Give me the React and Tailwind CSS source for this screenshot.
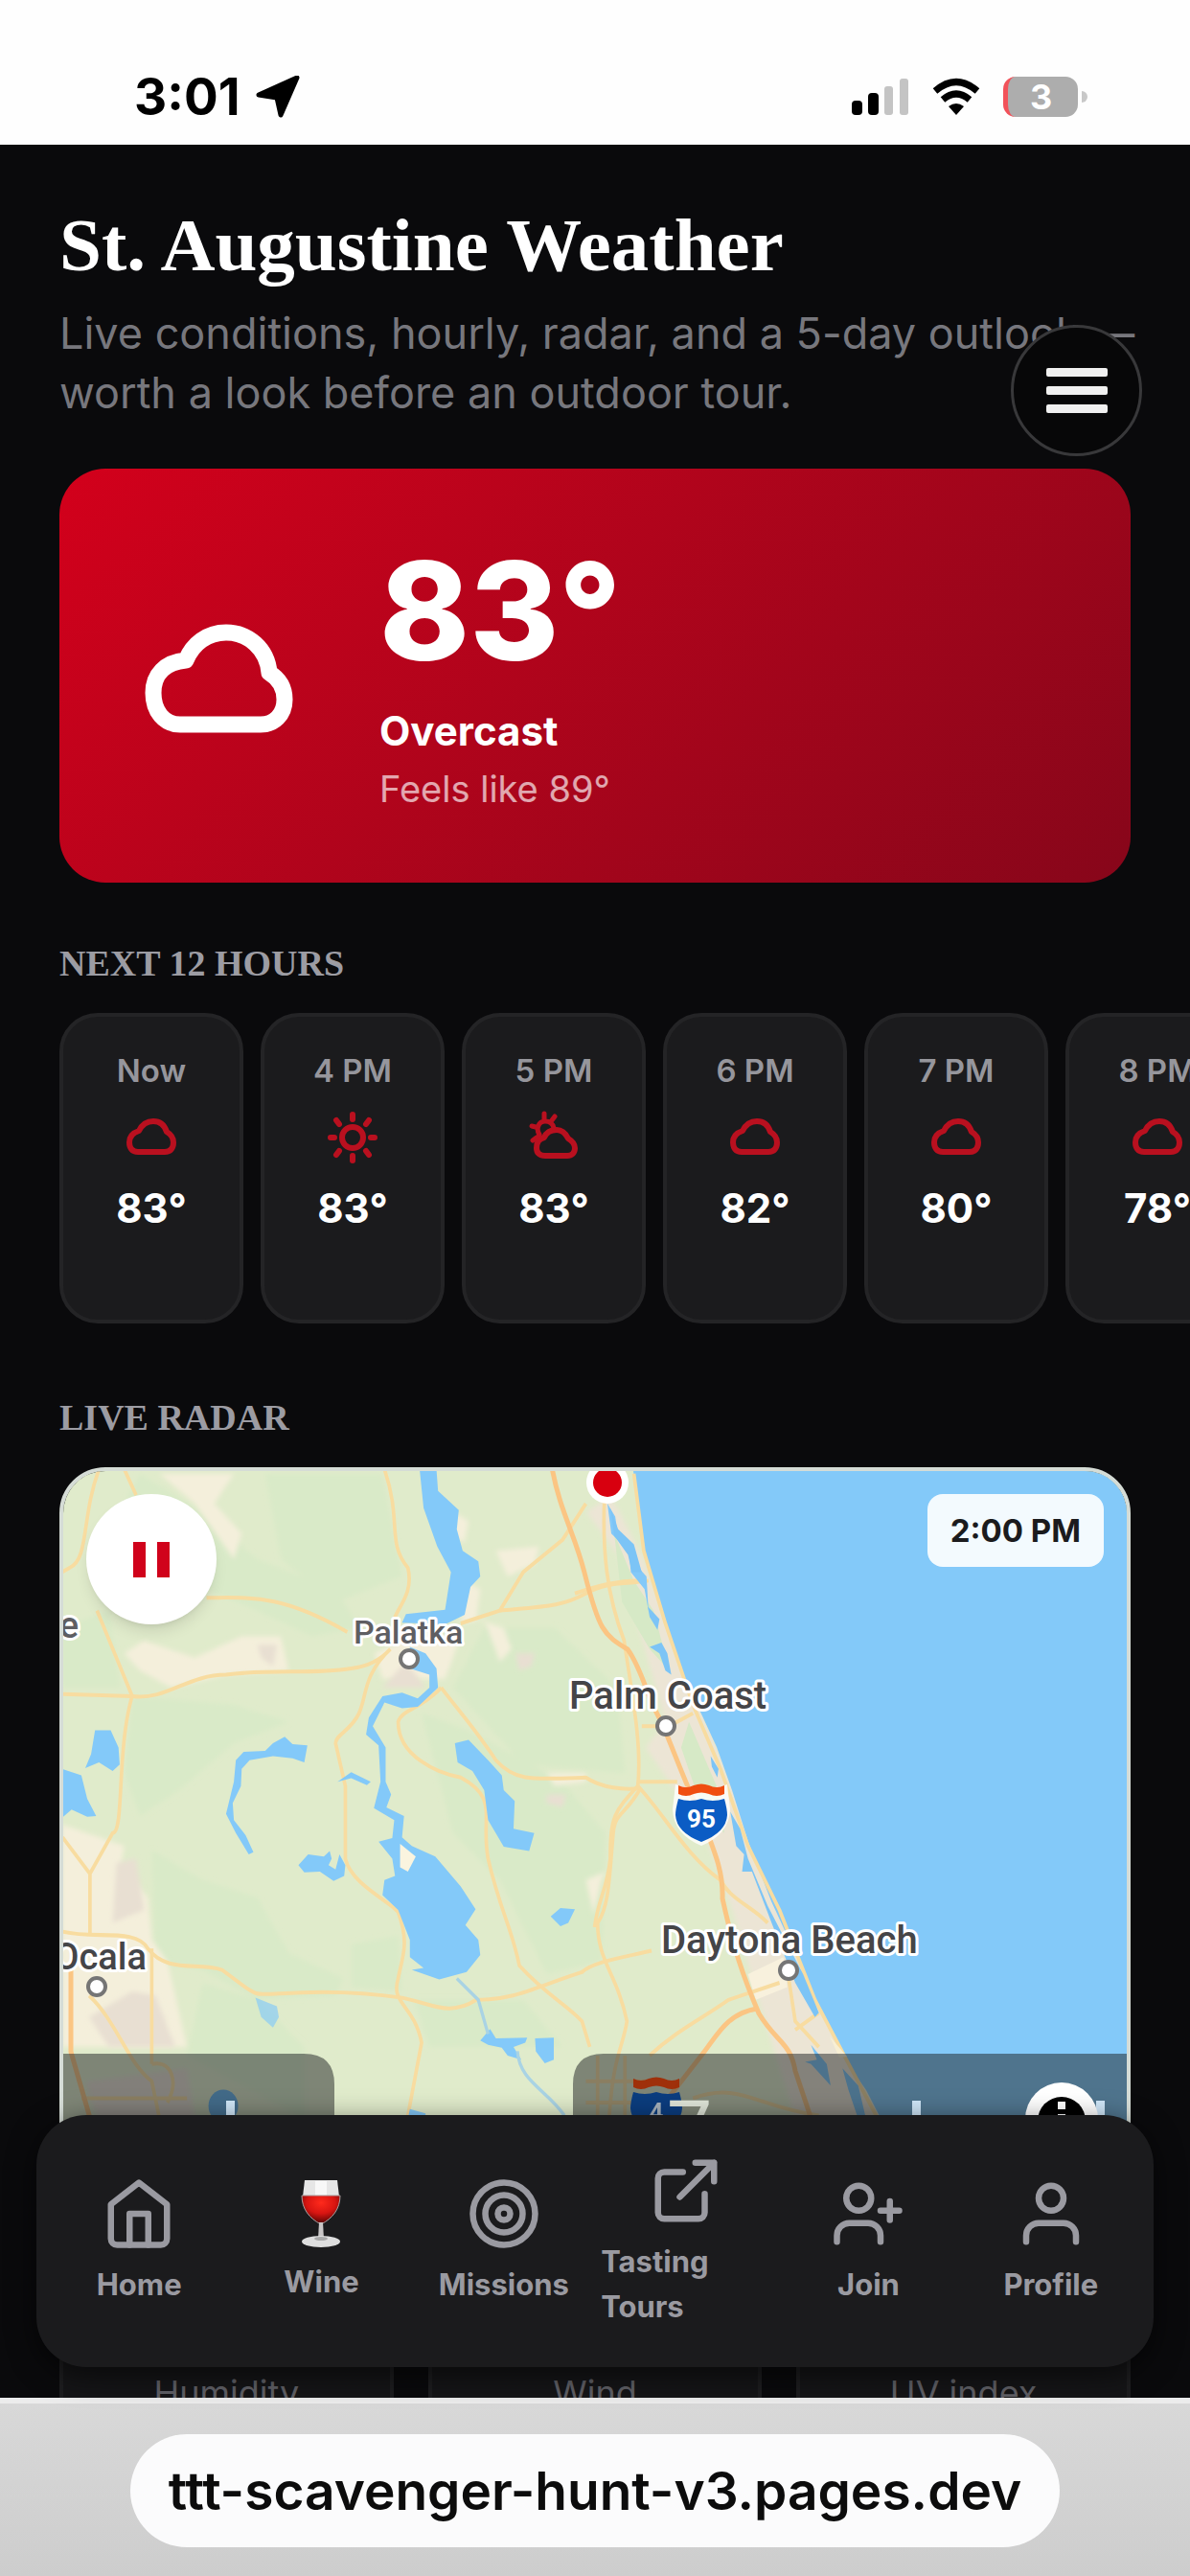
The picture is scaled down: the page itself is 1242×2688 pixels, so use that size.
import React from "react";

const CLOUD =
  "M188 755C171 755 160 741 160 722C160 703 172 690 194 688C201 671 216 659 236 659C259 659 279 676 281 701C291 707 297 716 297 729C297 745 286 755 272 755Z";

function Cloud({ className }) {
  return (
    <svg viewBox="150 649 158 118" className={className} fill="none" stroke="currentColor" strokeWidth="17" strokeLinejoin="round" aria-hidden="true">
      <path d={CLOUD} />
    </svg>
  );
}

function SmallCloud() {
  return (
    <svg viewBox="0 0 52 60" className="h-[60px] w-[52px]" fill="none" stroke="currentColor" strokeWidth="6" strokeLinejoin="round" aria-hidden="true">
      <path d="M12 45C6 45 3 41 3 35C3 29 7 25 13 23C16 17 21 13 28 13C36 13 40 18 42 24C47 27 49 31 49 35C49 41 46 45 40 45Z" />
    </svg>
  );
}

function Sun() {
  return (
    <svg viewBox="0 0 52 60" className="h-[60px] w-[52px]" fill="none" stroke="currentColor" strokeWidth="6" strokeLinecap="round" aria-hidden="true">
      <circle cx="26" cy="30" r="11" />
      <path d="M26 6v5M26 49v5M3 30h4M45 30h4M9 12l3 4M43 12l-3 4M9 48l3-4M43 48l-3-4" />
    </svg>
  );
}

function PartlyCloudy() {
  return (
    <svg viewBox="0 0 52 60" className="h-[60px] w-[52px]" fill="none" stroke="currentColor" strokeWidth="6" strokeLinejoin="round" strokeLinecap="round" aria-hidden="true">
      <path d="M17 49C11 49 8 46 8 41C8 35 11 31 16 30C18 25 23 22 29 22C36 22 39 27 41 31C46 34 48 37 48 41C48 46 45 49 40 49Z" />
      <path d="M11 27C7 21 10 13 17 13C22 13 25 16 26 20M16 5v6M27 8l-3 4M3 18l4 1M4 33l4-3" strokeWidth="5" />
    </svg>
  );
}

const HOURS = [
  { label: "Now", Icon: SmallCloud, temp: "83°" },
  { label: "4 PM", Icon: Sun, temp: "83°" },
  { label: "5 PM", Icon: PartlyCloudy, temp: "83°" },
  { label: "6 PM", Icon: SmallCloud, temp: "82°" },
  { label: "7 PM", Icon: SmallCloud, temp: "80°" },
  { label: "8 PM", Icon: SmallCloud, temp: "78°" },
];

function NavIcon({ children }) {
  return (
    <svg viewBox="0 0 24 24" className="size-[78px]" fill="none" stroke="currentColor" strokeWidth="2" strokeLinecap="round" strokeLinejoin="round" aria-hidden="true">
      {children}
    </svg>
  );
}

function WineGlass() {
  return (
    <svg viewBox="0 0 42 72" className="h-[72px] w-[42px]" aria-hidden="true">
      <defs>
        <radialGradient id="wine" cx="50%" cy="25%" r="75%">
          <stop offset="0" stopColor="#ff2a1c" />
          <stop offset="0.5" stopColor="#d81511" />
          <stop offset="1" stopColor="#4a0303" />
        </radialGradient>
      </defs>
      <path d="M4 1H38L40 18H2Z" fill="#e6e6e6" />
      <path d="M15 2H27V17H15Z" fill="#f8f8f8" />
      <path d="M1 17H41C41 31 33 41 21 47C9 41 1 31 1 17Z" fill="url(#wine)" stroke="#a9a0a0" strokeWidth="1" />
      <path d="M19 45H23L24 62H18Z" fill="#c9c6c6" />
      <ellipse cx="21" cy="65" rx="20" ry="6" fill="#dedede" />
      <ellipse cx="21" cy="62" rx="7" ry="2" fill="#a8a8a8" />
    </svg>
  );
}

const NAV = [
  {
    label: "Home",
    icon: (
      <NavIcon>
        <path d="m3 9 9-7 9 7v11a2 2 0 0 1-2 2H5a2 2 0 0 1-2-2z" />
        <path d="M9 22V12h6v10" />
      </NavIcon>
    ),
  },
  { label: "Wine", icon: <WineGlass /> },
  {
    label: "Missions",
    icon: (
      <NavIcon>
        <circle cx="12" cy="12" r="10" />
        <circle cx="12" cy="12" r="6" />
        <circle cx="12" cy="12" r="2" />
      </NavIcon>
    ),
  },
  {
    label: "Tasting Tours",
    icon: (
      <NavIcon>
        <path d="M18 13v6a2 2 0 0 1-2 2H5a2 2 0 0 1-2-2V8a2 2 0 0 1 2-2h6" />
        <path d="M15 3h6v6M10 14 21 3" />
      </NavIcon>
    ),
  },
  {
    label: "Join",
    icon: (
      <NavIcon>
        <path d="M16 21v-2a4 4 0 0 0-4-4H6a4 4 0 0 0-4 4v2" />
        <circle cx="9" cy="7" r="4" />
        <path d="M19 8v6M22 11h-6" />
      </NavIcon>
    ),
  },
  {
    label: "Profile",
    icon: (
      <NavIcon>
        <path d="M20 21v-2a4 4 0 0 0-4-4H8a4 4 0 0 0-4 4v2" />
        <circle cx="12" cy="7" r="4" />
      </NavIcon>
    ),
  },
];

function Shield({ x, y, label, dim }) {
  return (
    <g transform={`translate(${x} ${y})`} opacity={dim ? 0.95 : 1}>
      <path d="M-27 0Q-13 6 0 0Q13 6 27 0L30 26Q29 52 0 64Q-29 52 -30 26Z" fill="#fff" opacity={dim ? 0 : 0.8} />
      <path d="M-24 1Q-16 5 -8 1Q0 -2 8 1Q16 5 24 1V10Q16 14 8 10Q0 7 -8 10Q-16 14 -24 10Z" fill={dim ? "#a12c05" : "#f04e10"} />
      <path d="M-24 15Q-12 19 0 15Q12 19 24 15Q27 26 27 32Q26 50 0 60Q-26 50 -27 32Q-27 26 -24 15Z" fill={dim ? "#053a80" : "#0b5cc4"} />
      <text x="0" y="45" textAnchor="middle" fontFamily="Roboto" fontWeight="700" fontSize="26" fill={dim ? "#a9b4bf" : "#ffffff"}>
        {label}
      </text>
    </g>
  );
}

function CityDot({ x, y }) {
  return <circle cx={x} cy={y} r="9" fill="#fff" stroke="#757575" strokeWidth="4" />;
}

function RadarMap() {
  return (
    <svg viewBox="66 1534 1111 802" preserveAspectRatio="xMinYMin slice" className="block h-[802px] w-full" role="img" aria-label="Radar map">
      <defs>
        <filter id="soft" x="-20%" y="-20%" width="140%" height="140%">
          <feGaussianBlur stdDeviation="6" />
        </filter>
        <clipPath id="panels">
          <path d="M60 2142H317Q349 2142 349 2174V2400H60ZM598 2174Q598 2142 630 2142H1190V2400H598Z" />
        </clipPath>
      </defs>
      <rect x="0" y="1500" width="2600" height="900" fill="#e0ebcb" />

      {/* terrain tints */}
      <g transform="translate(40 1510) scale(0.4082 0.4464)">
        <g fill="#d9eac8" filter="url(#soft)">
          <path d="M260 60L420 150L560 260L760 330L820 420L700 440L560 380L430 330L180 200Z" />
          <path d="M580 60H880L930 300L760 360L620 260Z" />
          <path d="M240 580L500 600L640 640L500 690L360 800L260 860L220 760Z" />
          <path d="M980 620L1100 660L1340 780L1450 900L1440 1200L1300 1230L1180 1010L1060 900Z" />
          <path d="M290 940L420 1010L560 1050L640 1180L780 1240L760 1280L560 1290L420 1220L300 1200Z" />
          <path d="M420 1250L560 1290L680 1400L680 1568L380 1420Z" />
          <path d="M1140 420L1320 420L1480 560L1500 760L1240 740L1060 560Z" />
          <path d="M800 1160L920 1140L930 1270L800 1260ZM960 1290L1240 1290L1340 1400H1000Z" />
          <path d="M60 420L180 380L210 560L60 560Z" />
        </g>
        <g fill="#f4efdb" filter="url(#soft)">
          <path d="M60 880L220 930L210 980L280 1050L290 1150L330 1200L380 1400H60Z" />
          <path d="M310 60H500L450 130L520 200L500 260L400 130Z" />
          <path d="M220 480L270 450L400 490L520 440L620 440L640 520L480 530L340 560L260 520Z" />
          <path d="M860 480L960 440L1080 440L1040 540L880 540Z" />
          <path d="M1170 240L1280 230L1270 270L1200 300ZM1090 310L1130 330L1120 400L1190 420L1210 470L1180 500L1140 400L1080 410Z" />
          <path d="M1060 150L1100 170L1090 220L1060 210ZM1300 760L1400 760L1400 780L1320 790Z" />
          <path d="M1400 1010L1450 990L1440 1010L1420 1090Z" />
        </g>
        <g fill="#e8dfd2" filter="url(#soft)">
          <path d="M560 460L610 460L600 510L570 490ZM200 970L250 960L270 1080L190 1110ZM240 1270L300 1280L350 1400H180L130 1330Z" />
          <path d="M1220 480L1270 480L1260 510L1230 520ZM1300 810L1350 810L1340 840L1300 830ZM880 560L940 500L990 560Z" />
          <path d="M120 1480L380 1450L400 1568H150Z" />
        </g>
      </g>
      <g transform="translate(600 1510) scale(0.4107 0.4464)">
        <path d="M30 150L90 110L170 250L300 560L420 830L520 1060L620 1290L780 1568H560L470 1300L400 1080L330 900L180 700L230 640L110 250Z" fill="#ece5d5" filter="url(#soft)" />
        <path d="M100 200L150 310L200 380L240 520L190 470L120 360ZM290 640L360 790L380 900L330 860L270 700Z" fill="#d6e9c6" />
        <path d="M440 1230L530 1190L540 1260L460 1290Z" fill="#f8f1dd" />
      </g>

      {/* ocean */}
      <path d="M660 1500L661 1534L666 1568L672 1617L692 1684L711 1742L748 1822L764 1867L781 1921L805 1983L830 2037L855 2095L879 2144L904 2180L935 2240L990 2400H2600V1500Z" fill="#83c9f9" />

      {/* roads */}
      <g transform="translate(40 1510) scale(0.4082 0.4464)" fill="none" stroke="#f8dca0" strokeWidth="9" strokeLinejoin="round">
        <path d="M155 50C110 160 130 260 80 280L60 290M220 50L250 110M885 50C930 170 890 220 945 280C960 340 920 370 910 400M150 380L240 580C200 700 220 900 190 900L132 995V1140M62 910L132 995" />
        <path d="M60 575L240 580C330 590 380 530 480 530C600 515 700 530 800 515C850 510 880 490 900 470M430 350C540 350 620 340 790 430M900 470C830 530 840 580 820 620C800 660 760 670 760 690L785 790V960C800 1020 900 1060 920 1085C950 1160 930 1190 920 1240C900 1300 960 1300 980 1390L945 1560" />
        <path d="M1030 560C1080 620 1120 660 1170 730C1220 780 1260 775 1400 770C1440 795 1500 800 1540 795M1030 560C980 610 930 610 920 640C920 720 1020 760 1080 770C1180 820 1130 860 1150 960C1180 1080 1210 1120 1230 1210C1300 1280 1350 1300 1390 1340L1410 1400" />
        <path d="M60 1130C140 1150 250 1120 280 1170C330 1230 410 1200 470 1220C560 1280 540 1280 620 1275C700 1270 820 1270 930 1285C1010 1300 1050 1330 1120 1290C1220 1290 1270 1260 1390 1225C1420 1200 1500 1190 1568 1175M1540 795C1500 860 1475 850 1470 900C1460 1000 1460 1070 1430 1110C1430 1200 1480 1230 1505 1340C1495 1400 1470 1420 1460 1560" />
        <path d="M1080 410L1180 380L1240 290L1340 215L1400 130M1180 380C1300 370 1340 370 1400 340C1460 310 1500 320 1560 310M290 1170V1440M130 1280C200 1340 230 1440 290 1480L310 1568M110 1520H380M290 1440C340 1430 360 1480 330 1530M1430 1420V1568M1500 1420V1568M1400 1480H1568M1400 1530H1568" />
      </g>
      <g transform="translate(600 1510) scale(0.4107 0.4464)" fill="none" stroke="#f8dca0" strokeWidth="9" strokeLinejoin="round">
        <path d="M75 120C70 240 80 340 125 450C150 600 170 700 160 790M150 60L175 240L230 410L300 600L370 750L440 930L520 1080L610 1290L690 1430L770 1568M160 790C230 860 280 950 370 1010C400 1060 450 1070 490 1110M160 790C100 850 90 860 90 960C80 1040 60 1050 50 1120M160 780H260M0 340C60 320 120 310 160 310M170 650H240L300 620" />
        <path d="M190 1420C260 1360 330 1330 390 1290L520 1250M540 1220L560 1340L620 1400M560 1360L620 1320M300 1520C420 1480 460 1540 620 1560" />
      </g>
      <g fill="none" stroke="#fbc583" strokeWidth="5" strokeLinejoin="round">
        <path d="M576 1530C584 1575 600 1600 610 1640C625 1700 630 1705 655 1720C670 1740 675 1770 690 1795C705 1830 715 1860 730 1890C745 1930 755 1950 754 1980C765 2030 775 2060 792 2100C810 2130 825 2130 830 2160L850 2220" />
        <path d="M790 2095C760 2100 750 2120 735 2140L700 2185M74 2050V2140L100 2230" />
      </g>

      {/* lakes and rivers */}
      <g transform="translate(40 1510) scale(0.4082 0.4464)" fill="#83c9f9">
        <path d="M975 50H1018L1022 100L1075 145L1070 190L1085 240L1125 265L1130 300L1105 325L1090 390L1040 412L930 408L940 388L1040 378L1055 290L1020 230L985 140Z" />
        <path d="M950 465L990 480L1018 515L1022 560L970 605L930 608L885 595L855 650L888 700V780L902 810L890 840L935 860L930 910L955 930L1015 955L1080 1025L1118 1078L1092 1115L1125 1150L1130 1185L1095 1225L1025 1242L955 1220L985 1215L950 1190V1150L920 1080L880 1045L885 1010L912 1000L905 960L870 920L905 912L910 870L858 842L875 780L870 695L838 670L845 630L880 580L930 572L970 585L1000 560V530L950 515Z" />
        <path d="M1065 690L1100 682L1150 730L1185 765L1190 800L1218 825L1215 890L1268 900L1255 942L1190 932L1150 870L1140 800L1110 755L1072 735Z" />
        <path d="M480 855L500 780L505 730L525 710L580 708L600 690L630 675L650 692L688 695L680 735L650 725L600 720L540 730L520 750L518 790L497 830L500 870L530 905L550 945L538 950L505 900Z" />
        <path d="M665 975L690 950L730 955L745 942L750 960L742 975L760 985L770 950L785 975L782 1000L755 1012L720 990L680 992Z" />
        <path d="M145 660L185 660L205 700L208 740L190 755L155 735L120 748L135 715ZM60 750L110 765L125 820L148 860L125 862L85 845L60 865Z" />
        <path d="M1310 1095L1335 1075L1372 1078L1355 1110L1335 1118ZM765 780L800 758L850 780L840 788L800 772ZM1270 1380L1318 1378V1430L1295 1438L1272 1410ZM1130 1385L1155 1358L1170 1380L1250 1378L1245 1390L1215 1400L1235 1430L1200 1420L1185 1402L1150 1395Z" />
        <path d="M555 1285L610 1305L615 1330L600 1355L570 1330Z" opacity="0.65" />
        <path d="M950 1545L990 1555V1568H945Z" />
        <path d="M1455 130L1475 160L1480 190L1520 230L1525 270L1555 300L1560 380L1550 330L1515 290L1510 240L1465 200Z" />
        <circle cx="473" cy="1538" r="38" fill="#68b4ee" />
        <path d="M1070 1240L1125 1290L1150 1370M1225 1410C1230 1480 1300 1500 1345 1560" fill="none" stroke="#a9d3e4" strokeWidth="8" />
        <path d="M925 925L965 955L945 990L925 980Z" fill="#faf4df" />
      </g>
      <g transform="translate(600 1510) scale(0.4107 0.4464)" fill="#7cc4f6">
        <path d="M90 140L110 190L150 225L170 290L145 290L135 250L100 205ZM185 370L215 400L210 425L190 395ZM190 465L220 455L235 480L245 530L230 520L215 480ZM345 720L365 750L362 770L348 745ZM395 850L420 890L440 960L490 1070L580 1230L620 1320L610 1330L560 1250L500 1110L450 990L425 990L430 950L410 930ZM600 1395L640 1440L650 1490L600 1440L585 1435L615 1430ZM680 1450L720 1490L740 1568H720L695 1500Z" />
      </g>
      <path d="M866 2124L884 2145L876 2146Z" fill="#f8efd4" />

      {/* city labels */}
      <g fill="#454548" stroke="#ffffff" strokeWidth="6" strokeLinejoin="round" paintOrder="stroke" fontFamily="Roboto" fontWeight="500">
        <text x="369" y="1714" fontSize="34" fill="#5e5e62">Palatka</text>
        <text x="594" y="1782" fontSize="40">Palm Coast</text>
        <text x="690" y="2037" fontSize="40">Daytona Beach</text>
        <text x="153" y="2054" fontSize="38" textAnchor="end">Ocala</text>
        <text x="82" y="1708" fontSize="38" textAnchor="end" fill="#5e5e62">e</text>
      </g>
      <CityDot x={427} y={1730} />
      <CityDot x={101} y={2072} />
      <CityDot x={695} y={1800} />
      <CityDot x={823} y={2055} />
      <Shield x={732} y={1861} label="95" />
      <circle cx="634" cy="1546" r="22" fill="#fff" />
      <circle cx="634" cy="1546" r="15" fill="#d8000f" />

      {/* map attribution panels */}
      <g clipPath="url(#panels)">
        <rect x="60" y="2140" width="1130" height="260" fill="#1c2022" opacity="0.5" />
      </g>
      <Shield x={685} y={2167} label="4" dim />
      <text x="696" y="2250" fontFamily="Roboto" fontWeight="400" fontSize="84" fill="#dfe5d8">7</text>
      <path d="M236 2191h9v40h-9ZM952 2191h9v40h-9ZM1144 2191h9v40h-9Z" fill="#cfe6f8" />
      <circle cx="1108" cy="2210" r="38" fill="#fff" />
      <circle cx="1108" cy="2212" r="25" fill="#000" />
      <path d="M1104 2192h8v8h-8ZM1104 2205h8v24h-8Z" fill="#fff" />
    </svg>
  );
}

function SectionTitle({ children, className }) {
  return (
    <h2 className={`font-['Liberation_Serif',serif] text-[38px] leading-14 font-bold text-[#9c9ca3] uppercase ${className}`}>
      {children}
    </h2>
  );
}

export default function App() {
  return (
    <div className="flex h-screen flex-col overflow-hidden bg-[#0a0a0c] font-['Inter',sans-serif] text-white">
      <header className="flex h-[151px] shrink-0 items-center justify-between bg-[#fefefe] pt-[51px] pr-[107px] pl-[140px] text-black">
        <div className="flex items-center gap-4">
          <span className="text-[53px] leading-none font-bold">3:01</span>
          <svg viewBox="0 0 46 44" className="h-11 w-[46px]" aria-hidden="true">
            <path d="M43 2L26 41L22 23L3 20Z" fill="#000" stroke="#000" strokeWidth="5" strokeLinejoin="round" />
          </svg>
        </div>
        <div className="flex items-center gap-6">
          <svg viewBox="0 0 60 40" className="h-10 w-[60px]" aria-hidden="true">
            <rect x="0" y="24" width="11" height="15" rx="4" />
            <rect x="17" y="16" width="11" height="23" rx="4" />
            <rect x="34" y="9" width="9" height="30" rx="3" fill="#c4c4c4" />
            <rect x="50" y="1" width="9" height="38" rx="3" fill="#c4c4c4" />
          </svg>
          <svg viewBox="0 0 50 40" className="h-10 w-[50px]" fill="none" stroke="#000" strokeWidth="7" aria-hidden="true">
            <path d="M3 14Q25 -5 47 14" />
            <path d="M11 23Q25 11 39 23" />
            <path d="M17 30Q25 24 33 30L25 39Z" fill="#000" stroke="none" />
          </svg>
          <div className="flex items-center gap-1">
            <span className="flex h-[42px] w-[78px] items-center justify-center rounded-[13px] border-l-[5px] border-[#f2525a] bg-[#adadad] pr-1 text-[36px] leading-none font-bold text-white">
              3
            </span>
            <span className="h-3 w-1.5 rounded-r-full bg-[#c8c8c8]" />
          </div>
        </div>
      </header>

      <div className="relative min-h-0 flex-1">
        <main className="h-full overflow-x-hidden overflow-y-auto px-[62px] pt-15 [scrollbar-width:none]">
          <h1 className="font-['Liberation_Serif',serif] text-[79px] leading-[90px] font-bold">St. Augustine Weather</h1>
          <p className="mt-4 -mr-8 text-[45px] leading-[62px] text-[#77777d]">
            Live conditions, hourly, radar, and a 5-day outlook — worth a look before an outdoor tour.
          </p>

          <section className="mt-12 flex items-center gap-22 rounded-[48px] bg-linear-135 from-[#d3001b] to-[#87061a] pt-19 pb-17 pl-22">
            <Cloud className="h-[118px] w-[158px]" />
            <div>
              <p className="text-[142px] leading-36 font-extrabold">83°</p>
              <p className="mt-6 text-[42px] leading-15 font-bold">Overcast</p>
              <p className="text-[38px] leading-15 text-white/65">Feels like 89°</p>
            </div>
          </section>

          <SectionTitle className="mt-14">Next 12 hours</SectionTitle>
          <ul className="-mr-[62px] mt-6 flex gap-[18px] overflow-x-auto [scrollbar-width:none]">
            {HOURS.map(({ label, Icon, temp }) => (
              <li key={label} className="flex w-48 shrink-0 flex-col items-center rounded-[40px] border-4 border-[#242426] bg-[#1b1b1d] pt-8 pb-23">
                <span className="text-[33px] leading-12 font-semibold text-[#96969c]">{label}</span>
                <span className="mt-4 text-[#b9101f]">
                  <Icon />
                </span>
                <span className="mt-5 text-[42px] leading-12 font-bold">{temp}</span>
              </li>
            ))}
          </ul>

          <SectionTitle className="mt-[70px]">Live radar</SectionTitle>
          <section className="relative mt-6 overflow-hidden rounded-[48px] border-4 border-[#d5dcd6]">
            <RadarMap />
            <button type="button" aria-label="Pause radar" className="absolute top-6 left-6 flex size-[136px] items-center justify-center gap-3 rounded-full bg-white shadow-lg">
              <span className="h-[37px] w-[13px] bg-[#d0021b]" />
              <span className="h-[37px] w-[13px] bg-[#d0021b]" />
            </button>
            <span className="absolute top-6 right-6 rounded-2xl bg-white/90 px-6 py-3.5 text-[33px] leading-12 font-bold text-[#1b1b1d]">2:00 PM</span>
          </section>

          <ul className="mt-10 grid grid-cols-3 gap-9 pb-80">
            {["Humidity", "Wind", "UV index"].map((label) => (
              <li key={label} className="rounded-[40px] border-4 border-[#1d1d1f] bg-[#151517] pt-22 pb-10 text-center text-[36px] leading-12 text-[#606066]">
                {label}
              </li>
            ))}
          </ul>
        </main>

        <button
          type="button"
          aria-label="Open menu"
          className="absolute top-[188px] right-[50px] flex size-[137px] flex-col items-center justify-center gap-2.5 rounded-full border-[3px] border-[#38383a] bg-[#070708]"
        >
          <span className="h-[9px] w-16 rounded-xs bg-[#f0f0f0]" />
          <span className="h-[9px] w-16 rounded-xs bg-[#f0f0f0]" />
          <span className="h-[9px] w-16 rounded-xs bg-[#f0f0f0]" />
        </button>

        <nav className="absolute inset-x-[38px] bottom-8 grid grid-cols-6 items-center rounded-[52px] bg-[#1b1b1d] px-3 py-10 shadow-[0_8px_30px_rgba(0,0,0,0.6)]">
          {NAV.map(({ label, icon }) => (
            <a key={label} href="#" className="flex flex-col items-center gap-[11px] text-[#9a9aa1]">
              {icon}
              <span className="max-w-[178px] text-[31px] leading-[47px] font-bold">{label}</span>
            </a>
          ))}
        </nav>
      </div>

      <footer className="flex h-[186px] shrink-0 justify-center border-t-[6px] border-[#ececec] bg-linear-to-b from-[#d8d8d8] to-[#cdcdcd] pt-8">
        <button type="button" className="h-[118px] rounded-full bg-[#fbfbfc] px-10 text-[55px] leading-none font-semibold text-[#0c0c0c]">
          ttt-scavenger-hunt-v3.pages.dev
        </button>
      </footer>
    </div>
  );
}
